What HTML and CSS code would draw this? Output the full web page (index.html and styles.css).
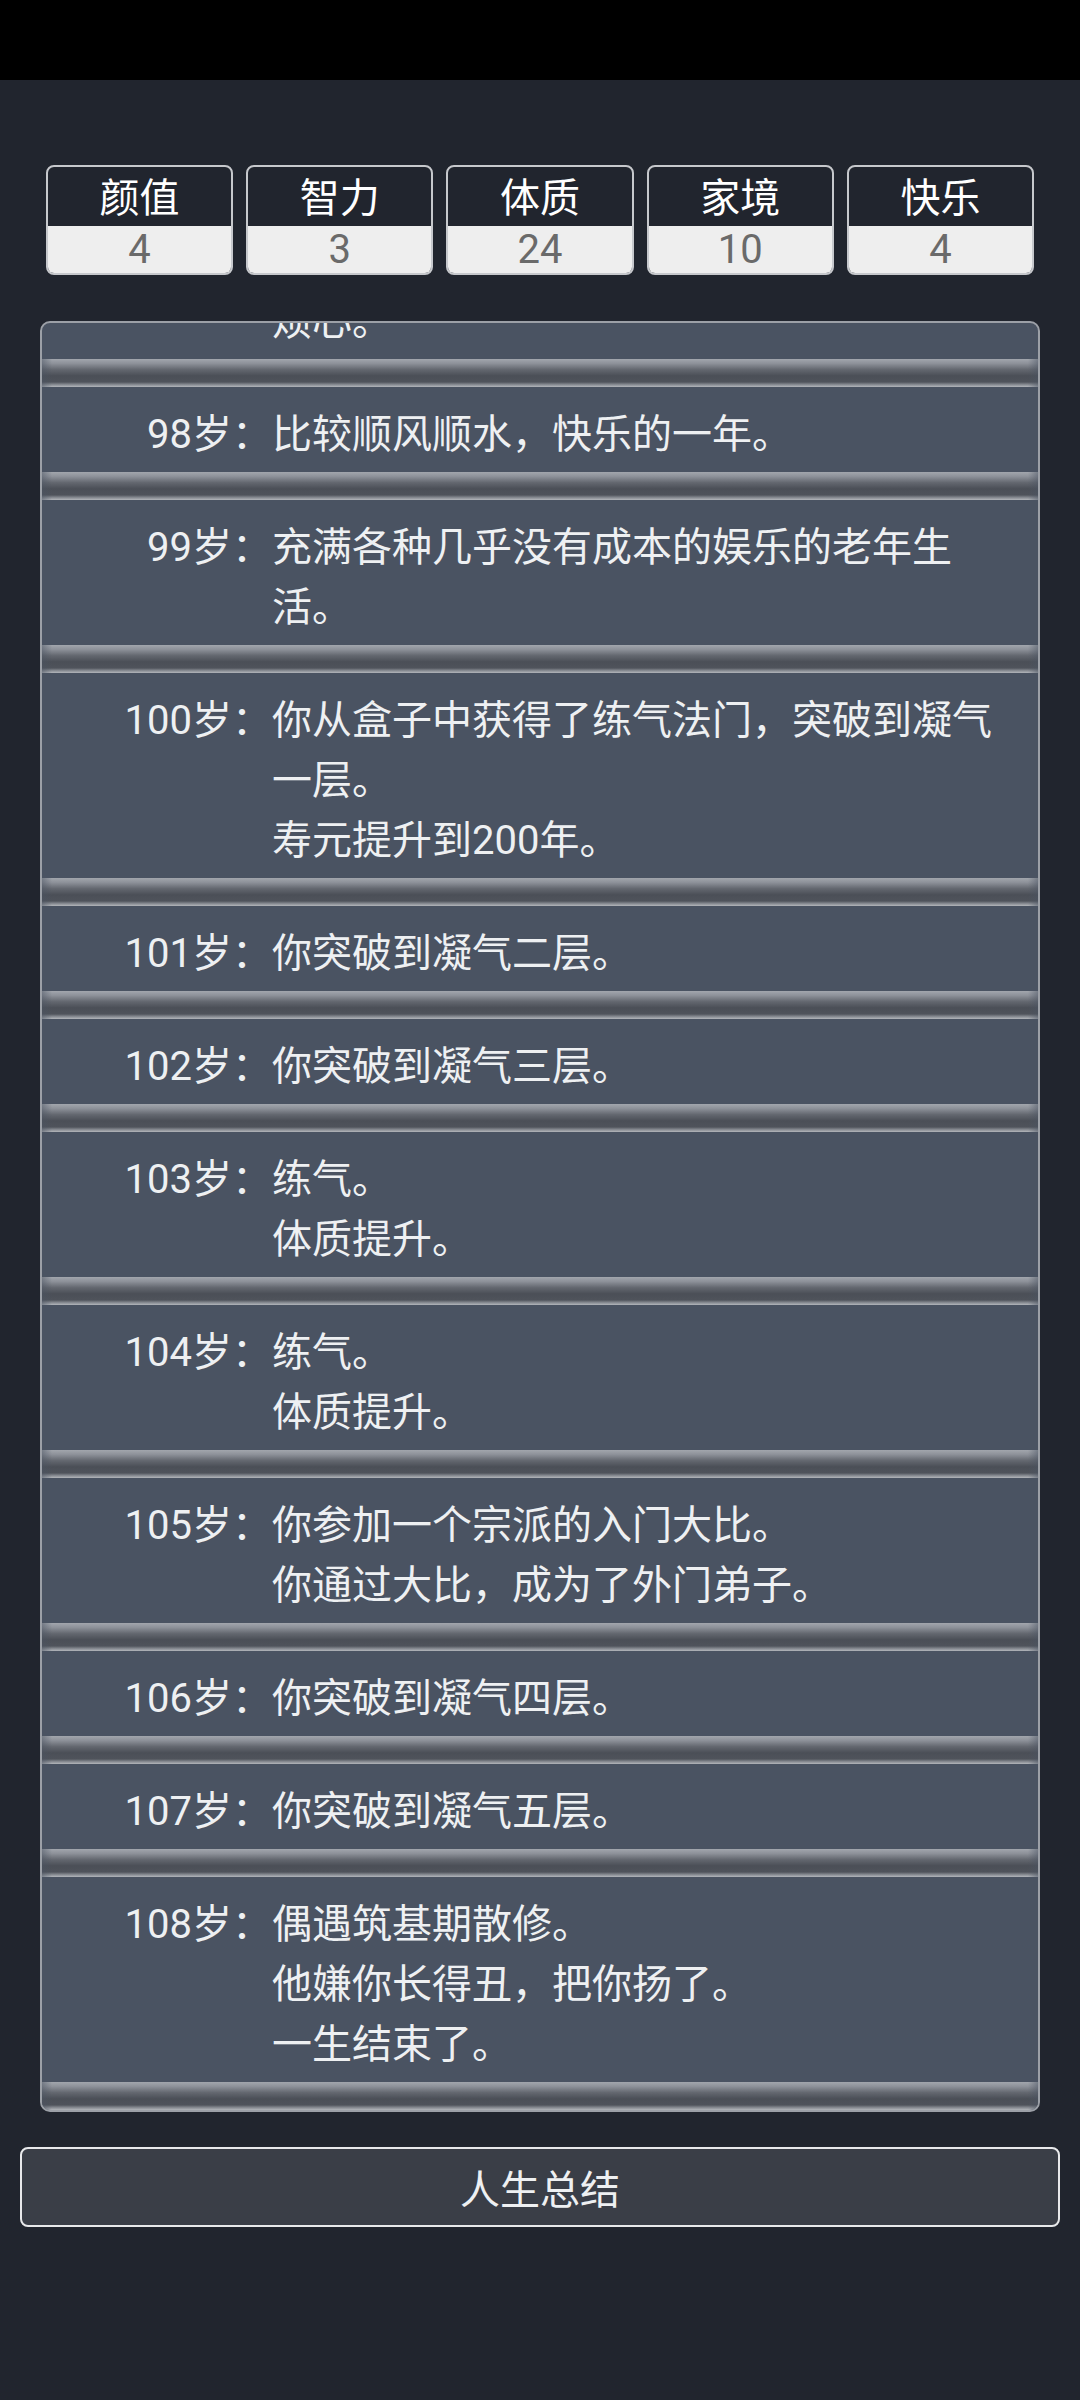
FILE: index.html
```html
<!DOCTYPE html>
<html lang="zh-CN">
<head>
  <meta charset="UTF-8" />
  <title>人生重开模拟器</title>
  <link rel="stylesheet" href="styles.css">
</head>
<body>
  <div class="status-bar"></div>

  <main class="page">
    <div class="stats">
      <div class="stat"><div class="stat-name">颜值</div><div class="stat-value">4</div></div>
      <div class="stat"><div class="stat-name">智力</div><div class="stat-value">3</div></div>
      <div class="stat"><div class="stat-name">体质</div><div class="stat-value">24</div></div>
      <div class="stat"><div class="stat-name">家境</div><div class="stat-value">10</div></div>
      <div class="stat"><div class="stat-name">快乐</div><div class="stat-value">4</div></div>
    </div>

    <div class="trajectory">
      <!-- list is scrolled down, first entry is only partly visible -->
      <ul class="events scrolled">
        <li class="event"><span class="age"></span><span class="text">烦心。</span></li>
        <li class="event"><span class="age">98岁：</span><span class="text">比较顺风顺水，快乐的一年。</span></li>
        <li class="event"><span class="age">99岁：</span><span class="text">充满各种几乎没有成本的娱乐的老年生活。</span></li>
        <li class="event"><span class="age">100岁：</span><span class="text">你从盒子中获得了练气法门，突破到凝气一层。<br>寿元提升到200年。</span></li>
        <li class="event"><span class="age">101岁：</span><span class="text">你突破到凝气二层。</span></li>
        <li class="event"><span class="age">102岁：</span><span class="text">你突破到凝气三层。</span></li>
        <li class="event"><span class="age">103岁：</span><span class="text">练气。<br>体质提升。</span></li>
        <li class="event"><span class="age">104岁：</span><span class="text">练气。<br>体质提升。</span></li>
        <li class="event"><span class="age">105岁：</span><span class="text">你参加一个宗派的入门大比。<br>你通过大比，成为了外门弟子。</span></li>
        <li class="event"><span class="age">106岁：</span><span class="text">你突破到凝气四层。</span></li>
        <li class="event"><span class="age">107岁：</span><span class="text">你突破到凝气五层。</span></li>
        <li class="event"><span class="age">108岁：</span><span class="text">偶遇筑基期散修。<br>他嫌你长得丑，把你扬了。<br>一生结束了。</span></li>
      </ul>
    </div>

    <button class="summary-btn">人生总结</button>
  </main>
</body>
</html>
```

FILE: styles.css
```css
body {
  margin: 0;
  background: #21252e;
  color: #eef0f2;
  font-family: Roboto, "Noto Sans CJK SC", sans-serif;
  min-height: 2400px;
}

.status-bar {
  height: 80px;
  background: #000;
}

/* ===== stats ===== */
.stats {
  display: grid;
  grid-template-columns: repeat(5, 1fr);
  gap: 13px;
  margin: 85px 46px 0;
}

.stat {
  border: 2px solid #c6c8cc;
  border-radius: 8px;
  overflow: hidden;
  text-align: center;
}

.stat-name {
  height: 59px;
  padding-top: 4px;
  box-sizing: border-box;
  line-height: 55px;
  font-size: 40px;
  color: #fff;
}

.stat-value {
  height: 47px;
  line-height: 47px;
  font-size: 40px;
  color: #6a6a6a;
  background: #eeeeee;
}

/* ===== trajectory list ===== */
.trajectory {
  margin: 46px 40px 0;
  border: 2px solid #9ca0a7;
  border-radius: 10px;
  background: #4a5362;
  overflow: hidden;
}

.events {
  list-style: none;
  margin: 0;
  padding: 0;
}

.events.scrolled {
  margin-top: -49px;
}

.event {
  display: grid;
  grid-template-columns: 230px 1fr;
  font-size: 40px;
  line-height: 60px;
}

.event .age {
  grid-column: 1;
  text-align: right;
  white-space: nowrap;
  padding: 18px 0 7px;
}

.event .text {
  grid-column: 2;
  padding: 18px 24px 7px 0;
}

/* groove between entries */
.event::after {
  content: "";
  grid-column: 1 / -1;
  height: 28px;
  background:
    linear-gradient(to right, rgba(74, 83, 98, 0.5), rgba(74, 83, 98, 0) 10px, rgba(74, 83, 98, 0) calc(100% - 10px), rgba(74, 83, 98, 0.5)),
    linear-gradient(to bottom, #a2a6ad 0%, #8d9199 16%, #63676f 38%, #4b4f57 60%, #4f535b 82%, #7f838a 90%, #b3b6bb 100%);
}

/* ===== button ===== */
.summary-btn {
  display: block;
  width: calc(100% - 40px);
  height: 80px;
  margin: 35px 20px 0;
  border: 2px solid #e8e9eb;
  border-radius: 8px;
  background: #3a3e47;
  color: #eef0f2;
  font-family: Roboto, "Noto Sans CJK SC", sans-serif;
  font-size: 40px;
  cursor: pointer;
}
```
